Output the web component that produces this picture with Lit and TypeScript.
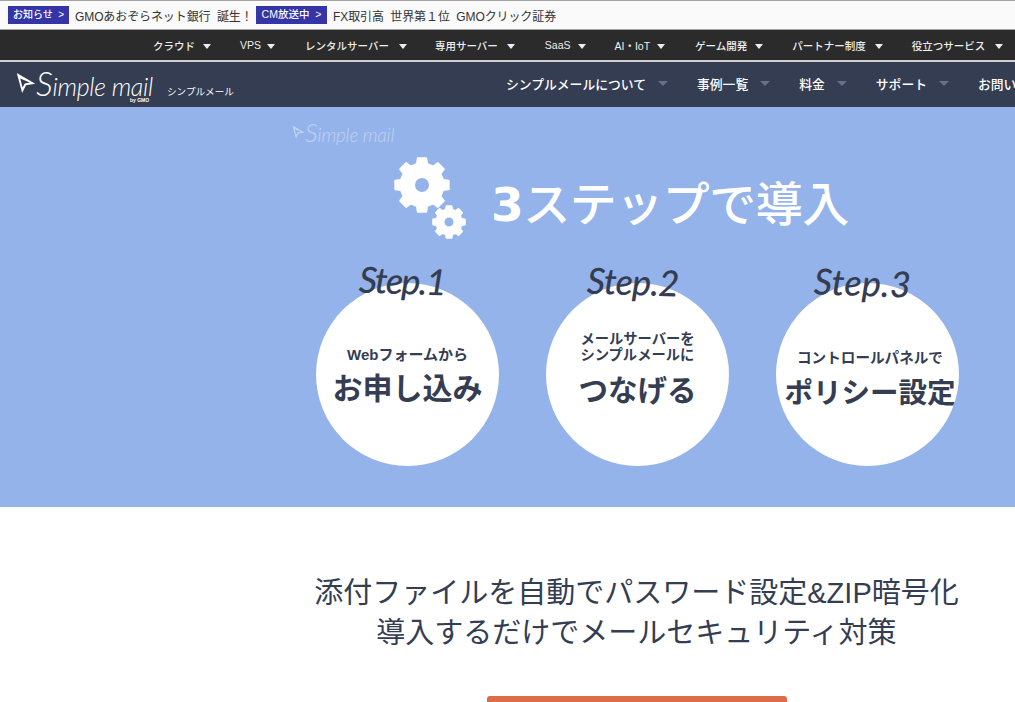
import { LitElement, html, css, svg } from "lit";
import { customElement } from "lit/decorators.js";

function gearPath(cx: number, cy: number, r: number, hole: number, teeth = 8): string {
  const pts: string[] = [];
  const step = (Math.PI * 2) / teeth;
  const root = r * 0.8;
  for (let i = 0; i < teeth; i++) {
    const a = i * step - Math.PI / 2;
    const w = step * 0.2;
    const w2 = step * 0.3;
    const p = (rad: number, ang: number) => `${(cx + rad * Math.cos(ang)).toFixed(2)} ${(cy + rad * Math.sin(ang)).toFixed(2)}`;
    pts.push(`${i === 0 ? "M" : "L"}${p(root, a - w2)}`);
    pts.push(`L${p(r, a - w)}`);
    pts.push(`L${p(r, a + w)}`);
    pts.push(`L${p(root, a + w2)}`);
  }
  pts.push("Z");
  const h = `M${cx - hole} ${cy}a${hole} ${hole} 0 1 0 ${hole * 2} 0a${hole} ${hole} 0 1 0 ${-hole * 2} 0Z`;
  return pts.join("") + h;
}

const cursor = svg`<path d="M1 1 L25 15 L13 17 L8 27 Z M5.500 8 L8.500 20 L11.500 14.500 L18 13.500 Z" fill-rule="evenodd" fill="currentColor"/>`;

@customElement("app-root")
export class AppRoot extends LitElement {
  static styles = css`
    :host {
      display: block;
      width: 1015px;
      height: 702px;
      overflow: hidden;
      background: #fff;
      font-family: "Liberation Sans", "Noto Sans CJK JP", sans-serif;
      color: #343d52;
    }
    .notice {
      height: 28px;
      border-top: 1px solid #a3a3a3;
      border-bottom: 1px solid #a3a3a3;
      background: #fafafa;
      display: flex;
      align-items: center;
      padding-left: 8px;
      font-size: 12px;
      letter-spacing: -0.1px;
      color: #333;
      white-space: pre;
    }
    .badge {
      background: #3535a8;
      color: #fff;
      height: 18px;
      line-height: 17px;
      font-size: 10.5px;
      font-weight: 500;
      letter-spacing: 0;
      text-align: center;
      margin-right: 6px;
    }
    .b1 { width: 61px; font-size: 10px; }
    .b2 { width: 71px; }
    .t1 { width: 181px; }
    .global {
      height: 30px;
      background: #2b2b2b;
      border-bottom: 2px solid #d0d0d0;
      display: flex;
      align-items: center;
      padding-left: 153px;
      color: #eee;
      font-size: 10.5px;
      font-weight: 500;
      white-space: nowrap;
    }
    .gitem { display: flex; align-items: center; flex: none; }
    .tri {
      width: 0;
      height: 0;
      margin-top: 2px;
      border-left: 4.5px solid transparent;
      border-right: 4.5px solid transparent;
      border-top: 5.5px solid #eee;
    }
    .main {
      height: 45px;
      background: #343d52;
      color: #fff;
      display: flex;
      align-items: center;
      white-space: nowrap;
      overflow: hidden;
    }
    .logo { display: flex; align-items: flex-start; margin-left: 16px; width: 151px; flex: none; position: relative; height: 45px; }
    .logo svg { width: 20px; height: 24px; margin-top: 9px; flex: none; }
    .logotext {
      font-family: "Lato", sans-serif;
      font-style: italic;
      font-weight: 300;
      font-size: 25px;
      line-height: 24px;
      margin-top: 12px;
      letter-spacing: -0.3px;
    }
    .cap { font-size: 1.35em; line-height: 0; }
    .by { position: absolute; left: 114px; top: 35px; font-size: 5px; font-weight: 700; line-height: 6px; }
    .sub { font-size: 9.6px; margin-top: 13px; width: 339px; flex: none; }
    .mitem { display: flex; align-items: center; gap: 12px; margin-right: 29px; margin-bottom: 2px; font-size: 12.8px; font-weight: 500; flex: none; }
    .mtri {
      width: 0;
      height: 0;
      border-left: 5px solid transparent;
      border-right: 5px solid transparent;
      border-top: 5px solid #667086;
    }
    .hero {
      height: 400px;
      background: #94b3ea;
      position: relative;
      box-sizing: border-box;
      padding: 50px 0 0 316px;
    }
    .hero-logo {
      position: absolute;
      left: 292px;
      top: 15px;
      display: flex;
      color: rgba(255, 255, 255, 0.42);
      font-family: "Lato", sans-serif;
      font-style: italic;
      font-weight: 300;
      font-size: 19px;
      line-height: 26px;
      letter-spacing: -0.2px;
      white-space: nowrap;
    }
    .hero-logo svg { width: 13px; height: 18px; flex: none; margin-top: 1px; }
    .title-row { display: flex; height: 100px; margin-left: 78px; }
    .gears { width: 97px; height: 90px; flex: none; color: #fff; }
    .title {
      color: #fff;
      font-size: 47px;
      font-weight: 500;
      line-height: 60px;
      margin-top: 18px;
      letter-spacing: -0.5px;
      white-space: nowrap;
    }
    .num { font-family: "DejaVu Sans", sans-serif; font-weight: 700; }
    .steps { display: flex; gap: 47px; margin-top: 26px; }
    .step {
      width: 183px;
      height: 183px;
      border-radius: 50%;
      background: #fff;
      position: relative;
      display: flex;
      flex-direction: column;
      align-items: center;
      font-weight: 700;
      white-space: nowrap;
    }
    .label {
      position: absolute;
      top: -25px;
      left: 43px;
      font-family: "Lato", sans-serif;
      font-style: italic;
      font-weight: 500;
      font-size: 36px;
      line-height: 44px;
      letter-spacing: -1.6px;
      white-space: nowrap;
      transform: rotate(2deg);
    }
    .s2 .label { left: 41px; top: -24px; letter-spacing: -0.7px; }
    .s3 .label { left: 38px; top: -23px; letter-spacing: 0.2px; }
    .small { font-size: 15px; line-height: 16px; }
    .big { font-size: 30px; line-height: 38px; }
    .s1 .small { margin-top: 64px; }
    .s1 .big { margin-top: 7px; }
    .s2 .small { font-size: 14.3px; margin-top: 48px; }
    .s2 .big { font-size: 29.5px; margin-top: 9px; }
    .s3 { padding-left: 5px; box-sizing: border-box; }
    .s3 .small { font-size: 14.6px; margin-top: 67px; }
    .s3 .big { font-size: 28.5px; margin-top: 8px; }
    .lower { padding-left: 258px; display: flex; flex-direction: column; align-items: center; }
    .lead {
      font-size: 29px;
      line-height: 40px;
      margin-top: 66px;
      text-align: center;
      white-space: nowrap;
      font-weight: 400;
    }
    .cta {
      width: 300px;
      height: 40px;
      margin-top: 43px;
      background: #dd6c49;
      border-radius: 3px;
      flex: none;
    }
  `;

  private globals: { t: string; gap: number; mr: number }[] = [
    { t: "クラウド", gap: 8, mr: 29 },
    { t: "VPS", gap: 6, mr: 30 },
    { t: "レンタルサーバー", gap: 10, mr: 28 },
    { t: "専用サーバー", gap: 9, mr: 30 },
    { t: "SaaS", gap: 7, mr: 29 },
    { t: "AI・IoT", gap: 7, mr: 30 },
    { t: "ゲーム開発", gap: 8, mr: 29 },
    { t: "パートナー制度", gap: 9, mr: 29 },
    { t: "役立つサービス", gap: 10, mr: 0 },
  ];

  private mains = ["シンプルメールについて", "事例一覧", "料金", "サポート", "お問い合わせ"];

  render() {
    return html`
      <div class="notice">
        <span class="badge b1">お知らせ  ></span>
        <span class="t1">GMOあおぞらネット銀行  誕生！</span>
        <span class="badge b2">CM放送中  ></span>
        <span>FX取引高  世界第１位  GMOクリック証券</span>
      </div>
      <nav class="global">
        ${this.globals.map(
          (g) => html`<div class="gitem" style="gap:${g.gap}px;margin-right:${g.mr}px">${g.t}<span class="tri"></span></div>`
        )}
      </nav>
      <nav class="main">
        <div class="logo">
          <svg viewBox="0 0 26 28">${cursor}</svg>
          <span class="logotext"><span class="cap">S</span>imple mail</span>
          <span class="by">by GMO</span>
        </div>
        <div class="sub">シンプルメール</div>
        ${this.mains.map((t) => html`<div class="mitem">${t}<span class="mtri"></span></div>`)}
      </nav>
      <section class="hero">
        <div class="hero-logo">
          <svg viewBox="0 0 26 28">${cursor}</svg>
          <span><span class="cap">S</span>imple mail</span>
        </div>
        <div class="title-row">
          <svg class="gears" viewBox="0 0 97 90">
            <path fill="currentColor" stroke="currentColor" stroke-width="2" stroke-linejoin="round" fill-rule="evenodd" d="${gearPath(28, 28, 27, 8)}" />
            <path fill="currentColor" stroke="currentColor" stroke-width="2" stroke-linejoin="round" fill-rule="evenodd" d="${gearPath(55, 65, 16, 5.5)}" />
          </svg>
          <div class="title"><span class="num">3</span>ステップで導入</div>
        </div>
        <div class="steps">
          <div class="step s1">
            <span class="label">Step.1</span>
            <div class="small">Webフォームから</div>
            <div class="big">お申し込み</div>
          </div>
          <div class="step s2">
            <span class="label">Step.2</span>
            <div class="small">メールサーバーを<br />シンプルメールに</div>
            <div class="big">つなげる</div>
          </div>
          <div class="step s3">
            <span class="label">Step.3</span>
            <div class="small">コントロールパネルで</div>
            <div class="big">ポリシー設定</div>
          </div>
        </div>
      </section>
      <section class="lower">
        <div class="lead">添付ファイルを自動でパスワード設定&ZIP暗号化<br />導入するだけでメールセキュリティ対策</div>
        <div class="cta"></div>
      </section>
    `;
  }
}
